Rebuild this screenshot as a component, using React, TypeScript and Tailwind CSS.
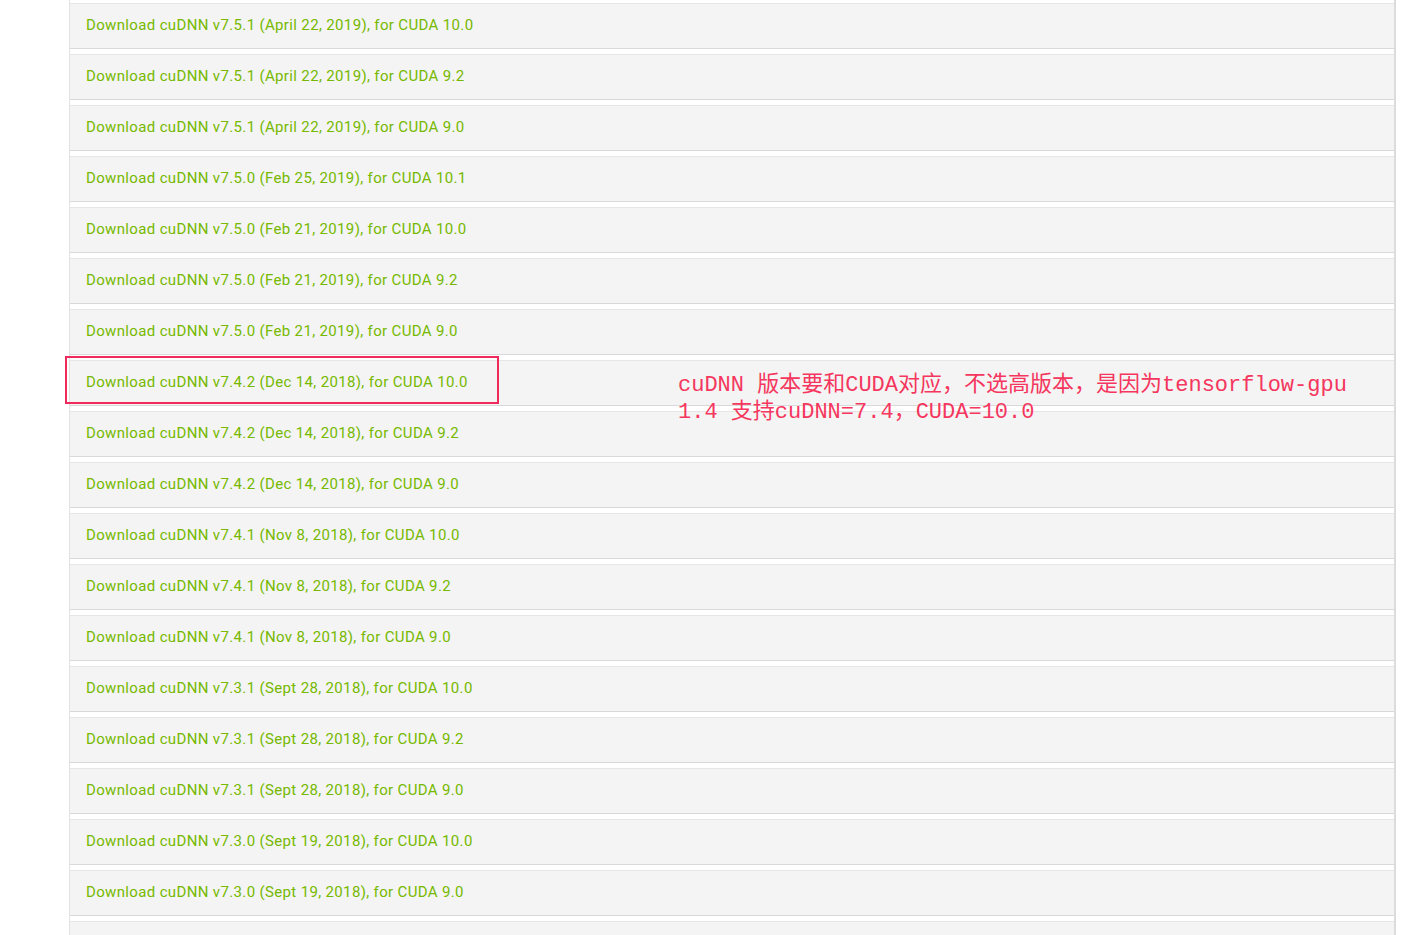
const rows = [
  "v7.5.1 (April 22, 2019), for CUDA 10.0",
  "v7.5.1 (April 22, 2019), for CUDA 9.2",
  "v7.5.1 (April 22, 2019), for CUDA 9.0",
  "v7.5.0 (Feb 25, 2019), for CUDA 10.1",
  "v7.5.0 (Feb 21, 2019), for CUDA 10.0",
  "v7.5.0 (Feb 21, 2019), for CUDA 9.2",
  "v7.5.0 (Feb 21, 2019), for CUDA 9.0",
  "v7.4.2 (Dec 14, 2018), for CUDA 10.0",
  "v7.4.2 (Dec 14, 2018), for CUDA 9.2",
  "v7.4.2 (Dec 14, 2018), for CUDA 9.0",
  "v7.4.1 (Nov 8, 2018), for CUDA 10.0",
  "v7.4.1 (Nov 8, 2018), for CUDA 9.2",
  "v7.4.1 (Nov 8, 2018), for CUDA 9.0",
  "v7.3.1 (Sept 28, 2018), for CUDA 10.0",
  "v7.3.1 (Sept 28, 2018), for CUDA 9.2",
  "v7.3.1 (Sept 28, 2018), for CUDA 9.0",
  "v7.3.0 (Sept 19, 2018), for CUDA 10.0",
  "v7.3.0 (Sept 19, 2018), for CUDA 9.0",
];

export default function App() {
  return (
    <div className="relative h-[935px] w-[1409px] overflow-hidden bg-white">
      <div className="ml-[69px] w-[1327px] h-full border-l border-l-[#e2e2e2] border-r-2 border-r-[#dcdcdc] pt-[3px]">
        {rows.map((r) => (
          <div
            key={r}
            className="h-[46px] mb-[5px] flex items-center pl-4 pb-[2px] bg-[#f4f4f4] border-t border-t-[#e6e6e6] border-b border-b-[#d9d9d9]"
          >
            <a className="text-[15px] text-[#76b900] font-['Roboto',sans-serif] tracking-[0.35px] cursor-pointer">
              Download cuDNN {r}
            </a>
          </div>
        ))}
        {/* next row, only its top edge is in view */}
        <div className="h-[46px] bg-[#f4f4f4] border-t border-t-[#e6e6e6]" />
      </div>

      {/* annotation overlay */}
      <div className="absolute left-[65px] top-[356px] w-[434px] h-[48px] border-2 border-[#f2295b]" />
      <div className="absolute left-[678px] top-[372px] text-[22px] leading-[27px] text-[#f5365e] font-['Liberation_Mono','Noto_Sans_CJK_SC',monospace] whitespace-nowrap">
        <div>cuDNN 版本要和CUDA对应，不选高版本，是因为tensorflow-gpu</div>
        <div>1.4 支持cuDNN=7.4，CUDA=10.0</div>
      </div>
    </div>
  );
}
